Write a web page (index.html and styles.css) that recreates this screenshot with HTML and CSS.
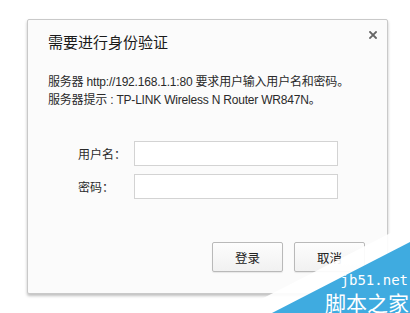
FILE: index.html
```html
<!DOCTYPE html>
<html lang="zh-CN">
<head>
    <meta charset="UTF-8">
    <title>需要进行身份验证</title>
    <link rel="stylesheet" href="styles.css">
</head>
<body>
    <div class="dialog">
        <div class="header">
            <h1 class="title">需要进行身份验证</h1>
            <svg class="close" width="8" height="8" viewBox="0 0 8 8">
                <path d="M1 1 L7 7 M7 1 L1 7" stroke="#666" stroke-width="1.8" stroke-linecap="square"></path>
            </svg>
        </div>
        <p class="message">服务器 http://192.168.1.1:80 要求用户输入用户名和密码。<br>服务器提示 : TP-LINK Wireless N Router WR847N。</p>
        <form class="login">
            <div class="row">
                <label for="user">用户名：</label>
                <input id="user" type="text">
            </div>
            <div class="row">
                <label for="pass">密码：</label>
                <input id="pass" type="password">
            </div>
            <div class="actions">
                <button type="button">登录</button>
                <button type="button">取消</button>
            </div>
        </form>
    </div>

    <!-- watermark in the corner -->
    <div class="watermark">
        <svg width="176" height="90" viewBox="0 0 176 90">
            <polygon points="0,90 176,0 176,90" fill="#ffffff" fill-opacity="0.92"></polygon>
            <polygon points="38,90 176,19 176,90" fill="#3fabe0"></polygon>
        </svg>
        <span class="wm-site">jb51.net</span>
        <span class="wm-name">脚本之家</span>
    </div>
</body>
</html>
```

FILE: styles.css
```css
/* General */
body {
    margin: 0;
    background: #ffffff;
    font-family: "Liberation Sans", "Noto Sans CJK SC", sans-serif;
    color: #222;
    overflow: hidden;
    height: 313px;
    position: relative;
}

.dialog {
    box-sizing: border-box;
    width: 361px;
    height: 275px;
    margin: 19px 0 0 27px;
    padding: 12px 22px 0 20px;
    background: #fbfbfb;
    border: 1px solid #c9c9c9;
    border-radius: 2px;
    box-shadow: 0 2px 3px rgba(0, 0, 0, 0.25);
}

/* Header */
.header {
    display: flex;
    justify-content: space-between;
    align-items: flex-start;
}

.title {
    margin: 0;
    font-family: "Noto Sans CJK SC", sans-serif;
    font-size: 15px;
    font-weight: normal;
    line-height: 20px;
    color: #1a1a1a;
}

.close {
    margin: -1px -12px 0 0;
}

/* Message */
.message {
    margin: 21px 0 0;
    font-size: 12px;
    line-height: 18px;
    color: #2a2a2a;
    white-space: nowrap;
    letter-spacing: -0.2px;
}

/* Form */
.login {
    margin-top: 32px;
    padding-left: 30px;
}

.row {
    display: flex;
    align-items: center;
    margin-bottom: 8px;
}

.row label {
    width: 56px;
    font-family: "Noto Sans CJK SC", sans-serif;
    font-size: 12px;
    color: #2a2a2a;
}

.row input {
    box-sizing: border-box;
    width: 204px;
    height: 25px;
    margin: 0;
    border: 1px solid #d3d3d3;
    background: #fff;
    outline: none;
}

.actions {
    display: flex;
    justify-content: flex-end;
    gap: 11px;
    margin-top: 43px;
}

.actions button {
    width: 71px;
    height: 30px;
    padding: 0;
    font-family: "Noto Sans CJK SC", sans-serif;
    font-size: 12.5px;
    color: #222;
    background: linear-gradient(#fdfdfd, #f1f1f1);
    border: 1px solid #b9b9b9;
    border-radius: 2px;
    box-shadow: 0 1px 1px rgba(0, 0, 0, 0.08);
}

/* Watermark */
.watermark {
    position: absolute;
    right: 0;
    bottom: 0;
    width: 176px;
    height: 90px;
}

.watermark svg {
    display: block;
}

.wm-site {
    position: absolute;
    right: 2px;
    bottom: 27px;
    font-family: "DejaVu Sans Mono", monospace;
    font-size: 14px;
    line-height: 11px;
    color: #ffffff;
}

.wm-name {
    position: absolute;
    right: 1px;
    bottom: 0;
    font-family: "Noto Sans CJK SC", sans-serif;
    font-size: 21px;
    line-height: 21px;
    color: #ffffff;
}
```
